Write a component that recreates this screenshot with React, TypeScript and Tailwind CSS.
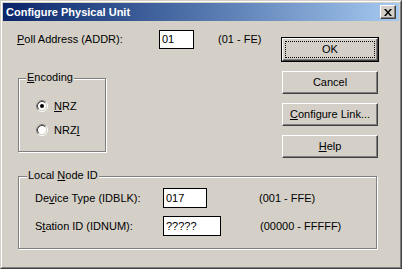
import React from "react";

function Radio({ checked }: { checked: boolean }) {
  return (
    <svg width="12" height="12" viewBox="0 0 12 12" className="shrink-0">
      <circle cx="6" cy="6" r="4.2" fill="#ffffff" />
      <path d="M2.11 9.89 A5.5 5.5 0 0 1 9.89 2.11" stroke="#808080" strokeWidth="1" fill="none" />
      <path d="M9.89 2.11 A5.5 5.5 0 0 1 2.11 9.89" stroke="#ffffff" strokeWidth="1" fill="none" />
      <path d="M2.82 9.18 A4.5 4.5 0 0 1 9.18 2.82" stroke="#404040" strokeWidth="1" fill="none" />
      <path d="M9.18 2.82 A4.5 4.5 0 0 1 2.82 9.18" stroke="#d4d0c8" strokeWidth="1" fill="none" />
      {checked && <circle cx="6" cy="6" r="2" fill="#000000" />}
    </svg>
  );
}

function Btn({ children, focus }: { children: React.ReactNode; focus?: boolean }) {
  return (
    <div className="w-[96px] h-[23px] bg-[#d4d0c8] border border-t-white border-l-white border-r-[#404040] border-b-[#404040] shadow-[inset_-1px_-1px_0_#808080] flex">
      {focus ? (
        <div className="flex-1 m-[2px] border border-dotted border-black flex items-center justify-center">
          {children}
        </div>
      ) : (
        <div className="flex-1 flex items-center justify-center">{children}</div>
      )}
    </div>
  );
}

export default function App() {
  return (
    <div className="w-[402px] h-[269px] bg-[#d4d0c8] border border-t-[#d4d0c8] border-l-[#d4d0c8] border-r-[#404040] border-b-[#404040] font-['Liberation_Sans',Arial,sans-serif] text-[11px] text-black leading-[13px] select-none">
      <div className="h-full border border-t-white border-l-white border-r-[#808080] border-b-[#808080] p-px flex flex-col">
        {/* Title bar */}
        <div className="h-[18px] shrink-0 flex items-center bg-gradient-to-r from-[#0a246a] to-[#a6caf0] pl-[3px] pr-[3px]">
          <span className="text-white font-bold flex-1">Configure Physical Unit</span>
          <div className="w-[16px] h-[14px] bg-[#d4d0c8] border border-t-white border-l-white border-r-[#404040] border-b-[#404040] shadow-[inset_-1px_-1px_0_#808080] flex items-center justify-center">
            <svg width="8" height="7" viewBox="0 0 8 7">
              <path d="M0 0 L2 0 L4 2.5 L6 0 L8 0 L5 3.5 L8 7 L6 7 L4 4.5 L2 7 L0 7 L3 3.5 Z" fill="#000" />
            </svg>
          </div>
        </div>

        {/* Body */}
        <div className="flex-1 flex flex-col">
          <div className="flex">
            {/* Left column */}
            <div className="flex-1 flex flex-col">
              <div className="mt-[9px] pl-[14px] flex items-center h-[19px]">
                <span className="w-[142px]">
                  <u>P</u>oll Address (ADDR):
                </span>
                <div className="w-[35px] h-[19px] border border-black bg-white pl-[2px] flex items-center">01</div>
                <span className="ml-[24px]">(01 - FE)</span>
              </div>

              <div className="relative mt-[29px] ml-[15px] w-[88px] h-[74px] border border-[#808080] shadow-[inset_1px_1px_0_#ffffff,1px_1px_0_#ffffff] flex flex-col pt-[21px] pl-[17px] gap-[12px]">
                <span className="absolute left-[7px] top-[-8px] px-px bg-[#d4d0c8]">
                  <u>E</u>ncoding
                </span>
                <div className="flex items-center gap-[6px] h-[12px]">
                  <Radio checked />
                  <span>
                    <u>N</u>RZ
                  </span>
                </div>
                <div className="flex items-center gap-[6px] h-[12px]">
                  <Radio checked={false} />
                  <span>
                    NRZ<u>I</u>
                  </span>
                </div>
              </div>
            </div>

            {/* Buttons */}
            <div className="mt-[16px] mr-[20px] flex flex-col gap-[9px]">
              <div className="border border-black">
                <Btn focus>OK</Btn>
              </div>
              <div className="mx-px">
                <Btn>Cancel</Btn>
              </div>
              <div className="mx-px">
                <Btn>
                  <span>
                    <u>C</u>onfigure Link...
                  </span>
                </Btn>
              </div>
              <div className="mx-px">
                <Btn>
                  <span>
                    <u>H</u>elp
                  </span>
                </Btn>
              </div>
            </div>
          </div>

          {/* Local Node ID group */}
          <div className="relative mt-[18px] ml-[15px] w-[359px] h-[73px] border border-[#808080] shadow-[inset_1px_1px_0_#ffffff,1px_1px_0_#ffffff] flex flex-col pt-[11px] pl-[16px] gap-[8px]">
            <span className="absolute left-[8px] top-[-8px] px-px bg-[#d4d0c8]">
              Local <u>N</u>ode ID
            </span>
            <div className="flex items-center h-[20px]">
              <span className="w-[128px]">
                De<u>v</u>ice Type (IDBLK):
              </span>
              <div className="w-[44px] h-[20px] border border-black bg-white pl-[2px] flex items-center">017</div>
              <span className="ml-[52px]">(001 - FFE)</span>
            </div>
            <div className="flex items-center h-[20px]">
              <span className="w-[128px]">
                S<u>t</u>ation ID (IDNUM):
              </span>
              <div className="w-[58px] h-[20px] border border-black bg-white pl-[2px] flex items-center">?????</div>
              <span className="ml-[39px]">(00000 - FFFFF)</span>
            </div>
          </div>
        </div>
      </div>
    </div>
  );
}
